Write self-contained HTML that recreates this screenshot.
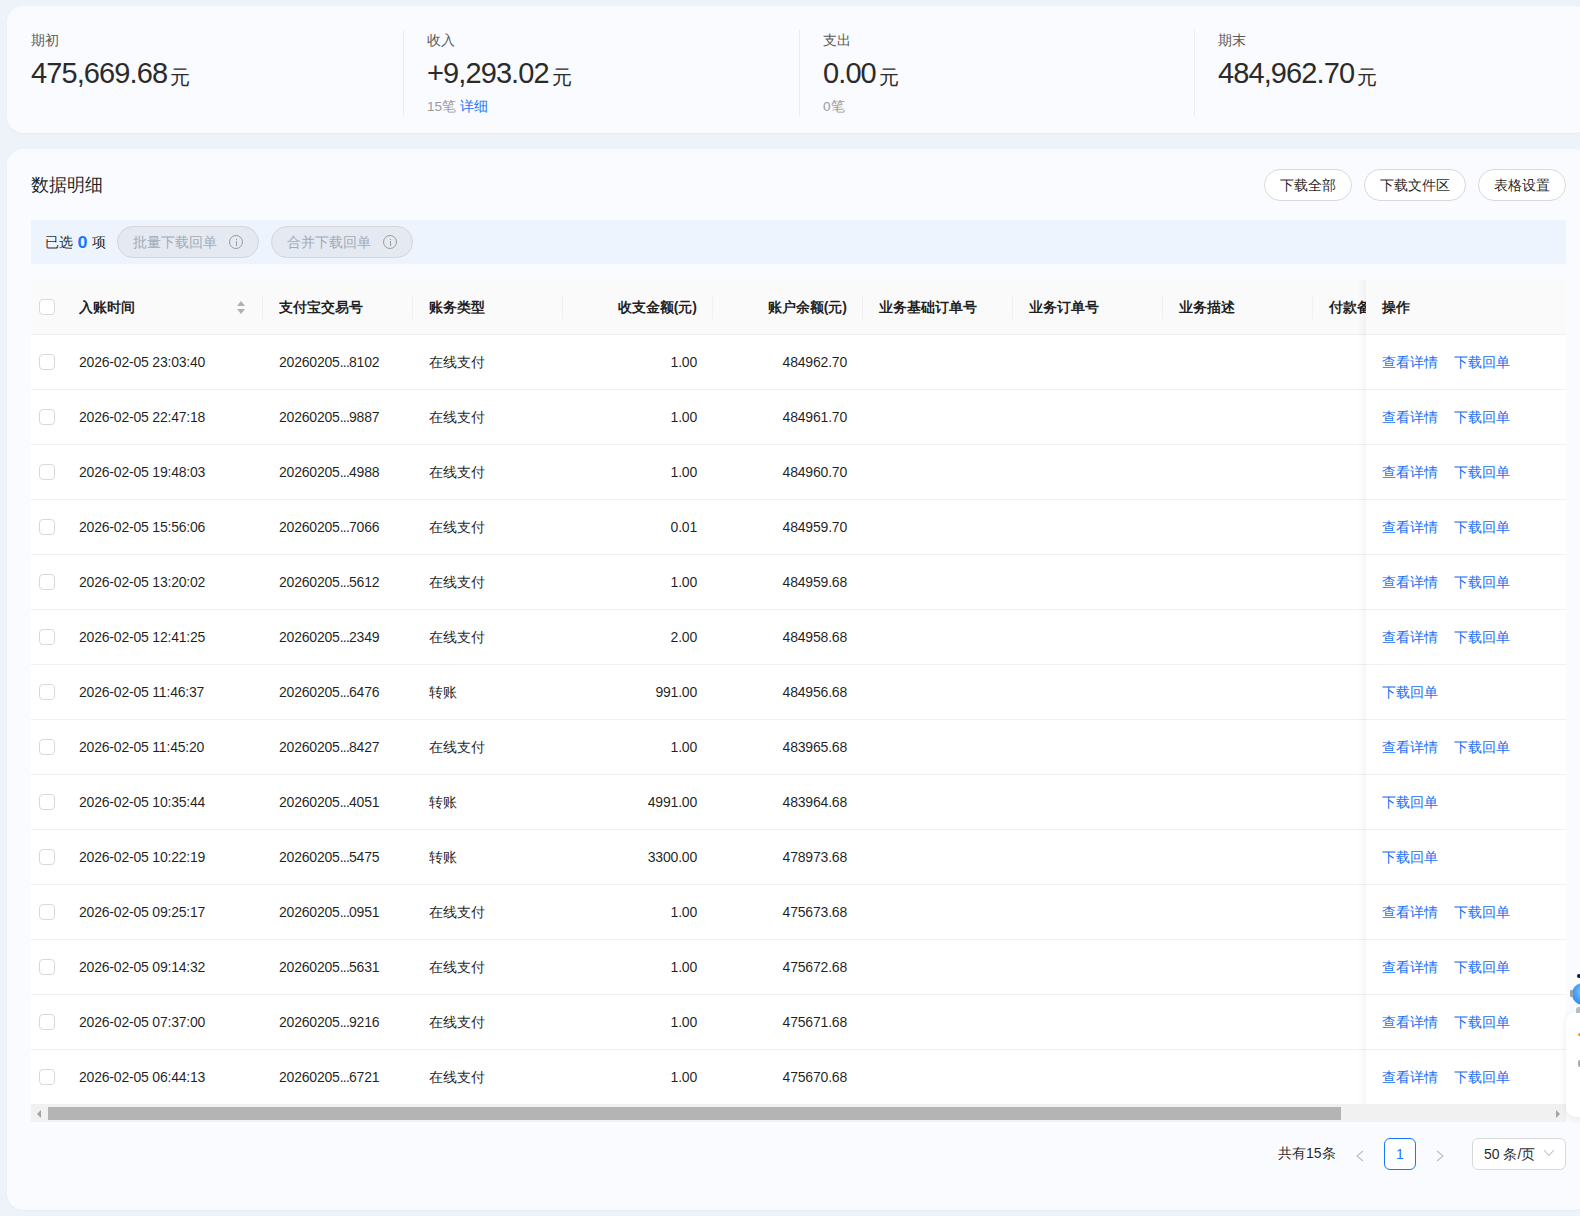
<!DOCTYPE html>
<html><head><meta charset="utf-8">
<style>
*{box-sizing:border-box;margin:0;padding:0}
html,body{width:1580px;height:1216px;overflow:hidden}
body{background:#eef2f9;font-family:"Liberation Sans",sans-serif;color:rgba(0,0,0,.88);position:relative}
.card{position:absolute;left:7px;width:1583px;background:#fafbfe;border-radius:16px;box-shadow:0 1px 2px rgba(0,20,60,.035)}
.abs{position:absolute;white-space:nowrap}
.lbl{font-size:14px;line-height:20px;color:#595959}
.num{font-size:29px;line-height:36px;letter-spacing:-0.9px;color:#2b2b2b}
.yuan{font-size:20px;letter-spacing:0;margin-left:3px;position:relative;top:1px}
.sub{font-size:13.5px;line-height:18px;color:#999}
.sub b{font-weight:normal;color:#1677ff}
.vdiv{position:absolute;top:24px;height:86px;width:1px;background:#ebedf0}
.btn{position:absolute;top:169px;height:32px;border:1px solid #d9d9d9;border-radius:16px;background:#fff;font-size:14px;line-height:30px;text-align:center;color:rgba(0,0,0,.88)}
.bar{position:absolute;left:31px;top:220px;width:1535px;height:44px;background:#eef4fd}
.pill{position:absolute;top:6px;height:32px;border:1px solid #d8d6d6;border-radius:16px;background:#e4e9f2;font-size:14px;line-height:30px;color:#a4abb6;padding-left:15px}
.info{position:absolute;top:8px;width:14px;height:14px;border:1px solid #9c9c9c;border-radius:50%}
.info:before{content:"";position:absolute;left:5.5px;top:2.5px;width:1.5px;height:1.5px;background:#9c9c9c}
.info:after{content:"";position:absolute;left:5.5px;top:5px;width:1.5px;height:4.5px;background:#9c9c9c}
.thead{position:absolute;left:31px;top:280px;width:1535px;height:55px;background:#fafafa;border-bottom:1px solid #f0f0f0;border-radius:10px 0 0 0}
.th{position:absolute;top:0;line-height:54px;font-size:14px;font-weight:bold;color:rgba(0,0,0,.88)}
.sep{position:absolute;top:16px;width:1px;height:23px;background:#f0f0f0}
.row{position:absolute;left:31px;width:1535px;height:55px;background:#fff;border-bottom:1px solid #f0f0f0}
.cb{position:absolute;left:8px;width:16px;height:16px;border:1px solid #d9d9d9;border-radius:4px;background:#fff}
.c{position:absolute;top:0;line-height:54px;font-size:14px;color:rgba(0,0,0,.88)}
.t{font-size:14px;letter-spacing:-0.2px;top:0.4px}
.r{text-align:right}
.fix{position:absolute;left:1366px;top:280px;width:200px;height:824px}
.fshadow{position:absolute;left:1336px;top:280px;width:30px;height:824px;box-shadow:inset -10px 0 8px -8px rgba(5,5,5,.06)}
.frow{position:absolute;left:1366px;width:200px;height:55px;background:#fff;border-bottom:1px solid #f0f0f0}
.lk{position:absolute;top:0;line-height:54px;font-size:14px;color:#1470f5}
.sb{position:absolute;left:31px;top:1104px;width:1535px;height:18px;background:#f1f1f1}
.thumb{position:absolute;left:17px;top:3px;width:1293px;height:13px;background:#b4b4b4}
</style></head><body>
<div class="card" style="top:6px;height:127px">
  <div class="abs lbl" style="left:24px;top:24px">期初</div>
  <div class="abs num" style="left:24px;top:49px">475,669.68<span class="yuan">元</span></div>
  <div class="vdiv" style="left:396px"></div>
  <div class="abs lbl" style="left:420px;top:24px">收入</div>
  <div class="abs num" style="left:420px;top:49px">+9,293.02<span class="yuan">元</span></div>
  <div class="abs sub" style="left:420px;top:92px">15笔 <b>详细</b></div>
  <div class="vdiv" style="left:792px"></div>
  <div class="abs lbl" style="left:816px;top:24px">支出</div>
  <div class="abs num" style="left:816px;top:49px">0.00<span class="yuan">元</span></div>
  <div class="abs sub" style="left:816px;top:92px">0笔</div>
  <div class="vdiv" style="left:1187px"></div>
  <div class="abs lbl" style="left:1211px;top:24px">期末</div>
  <div class="abs num" style="left:1211px;top:49px">484,962.70<span class="yuan">元</span></div>
</div>
<div class="card" style="top:149px;height:1061px"></div>
<div class="abs" style="left:31px;top:172px;font-size:18px;line-height:26px;color:rgba(0,0,0,.88)">数据明细</div>
<div class="btn" style="left:1264px;width:88px">下载全部</div>
<div class="btn" style="left:1364px;width:102px">下载文件区</div>
<div class="btn" style="left:1478px;width:88px">表格设置</div>
<div class="bar">
  <div class="abs" style="left:14px;top:0;line-height:44px;font-size:14px">已选 <b style="color:#1677ff;font-size:16px;display:inline-block;transform:scaleX(1.12);margin:0 1px;position:relative;top:0.5px">0</b> 项</div>
  <div class="pill" style="left:86px;width:142px">批量下载回单<i class="info" style="left:111px"></i></div>
  <div class="pill" style="left:240px;width:142px">合并下载回单<i class="info" style="left:111px"></i></div>
</div>
<div class="thead">
  <i class="cb" style="top:19px"></i>
  <span class="th" style="left:48px">入账时间</span>
  <svg class="abs" style="left:205px;top:20px" width="10" height="16" viewBox="0 0 10 16"><path d="M1 6 L5 1 L9 6 Z M1 9 L5 14 L9 9 Z" fill="#b0b0b0"/></svg>
  <i class="sep" style="left:231px"></i>
  <span class="th" style="left:248px">支付宝交易号</span>
  <i class="sep" style="left:381px"></i>
  <span class="th" style="left:398px">账务类型</span>
  <i class="sep" style="left:531px"></i>
  <span class="th" style="right:869px">收支金额(元)</span>
  <i class="sep" style="left:681px"></i>
  <span class="th" style="right:719px">账户余额(元)</span>
  <i class="sep" style="left:831px"></i>
  <span class="th" style="left:848px">业务基础订单号</span>
  <i class="sep" style="left:981px"></i>
  <span class="th" style="left:998px">业务订单号</span>
  <i class="sep" style="left:1131px"></i>
  <span class="th" style="left:1148px">业务描述</span>
  <i class="sep" style="left:1281px"></i>
  <span class="th" style="left:1298px">付款备注</span>
</div>
<div class="row" style="top:335px"><i class="cb" style="top:19px"></i><span class="c t" style="left:48px">2026-02-05 23:03:40</span><span class="c t" style="left:248px">20260205<span style="letter-spacing:-0.8px">...</span>8102</span><span class="c z" style="left:398px">在线支付</span><span class="c t r" style="right:869px">1.00</span><span class="c t r" style="right:719px">484962.70</span></div>
<div class="frow" style="top:335px"><span class="lk" style="left:16px">查看详情</span><span class="lk" style="left:88px">下载回单</span></div>
<div class="row" style="top:390px"><i class="cb" style="top:19px"></i><span class="c t" style="left:48px">2026-02-05 22:47:18</span><span class="c t" style="left:248px">20260205<span style="letter-spacing:-0.8px">...</span>9887</span><span class="c z" style="left:398px">在线支付</span><span class="c t r" style="right:869px">1.00</span><span class="c t r" style="right:719px">484961.70</span></div>
<div class="frow" style="top:390px"><span class="lk" style="left:16px">查看详情</span><span class="lk" style="left:88px">下载回单</span></div>
<div class="row" style="top:445px"><i class="cb" style="top:19px"></i><span class="c t" style="left:48px">2026-02-05 19:48:03</span><span class="c t" style="left:248px">20260205<span style="letter-spacing:-0.8px">...</span>4988</span><span class="c z" style="left:398px">在线支付</span><span class="c t r" style="right:869px">1.00</span><span class="c t r" style="right:719px">484960.70</span></div>
<div class="frow" style="top:445px"><span class="lk" style="left:16px">查看详情</span><span class="lk" style="left:88px">下载回单</span></div>
<div class="row" style="top:500px"><i class="cb" style="top:19px"></i><span class="c t" style="left:48px">2026-02-05 15:56:06</span><span class="c t" style="left:248px">20260205<span style="letter-spacing:-0.8px">...</span>7066</span><span class="c z" style="left:398px">在线支付</span><span class="c t r" style="right:869px">0.01</span><span class="c t r" style="right:719px">484959.70</span></div>
<div class="frow" style="top:500px"><span class="lk" style="left:16px">查看详情</span><span class="lk" style="left:88px">下载回单</span></div>
<div class="row" style="top:555px"><i class="cb" style="top:19px"></i><span class="c t" style="left:48px">2026-02-05 13:20:02</span><span class="c t" style="left:248px">20260205<span style="letter-spacing:-0.8px">...</span>5612</span><span class="c z" style="left:398px">在线支付</span><span class="c t r" style="right:869px">1.00</span><span class="c t r" style="right:719px">484959.68</span></div>
<div class="frow" style="top:555px"><span class="lk" style="left:16px">查看详情</span><span class="lk" style="left:88px">下载回单</span></div>
<div class="row" style="top:610px"><i class="cb" style="top:19px"></i><span class="c t" style="left:48px">2026-02-05 12:41:25</span><span class="c t" style="left:248px">20260205<span style="letter-spacing:-0.8px">...</span>2349</span><span class="c z" style="left:398px">在线支付</span><span class="c t r" style="right:869px">2.00</span><span class="c t r" style="right:719px">484958.68</span></div>
<div class="frow" style="top:610px"><span class="lk" style="left:16px">查看详情</span><span class="lk" style="left:88px">下载回单</span></div>
<div class="row" style="top:665px"><i class="cb" style="top:19px"></i><span class="c t" style="left:48px">2026-02-05 11:46:37</span><span class="c t" style="left:248px">20260205<span style="letter-spacing:-0.8px">...</span>6476</span><span class="c z" style="left:398px">转账</span><span class="c t r" style="right:869px">991.00</span><span class="c t r" style="right:719px">484956.68</span></div>
<div class="frow" style="top:665px"><span class="lk" style="left:16px">下载回单</span></div>
<div class="row" style="top:720px"><i class="cb" style="top:19px"></i><span class="c t" style="left:48px">2026-02-05 11:45:20</span><span class="c t" style="left:248px">20260205<span style="letter-spacing:-0.8px">...</span>8427</span><span class="c z" style="left:398px">在线支付</span><span class="c t r" style="right:869px">1.00</span><span class="c t r" style="right:719px">483965.68</span></div>
<div class="frow" style="top:720px"><span class="lk" style="left:16px">查看详情</span><span class="lk" style="left:88px">下载回单</span></div>
<div class="row" style="top:775px"><i class="cb" style="top:19px"></i><span class="c t" style="left:48px">2026-02-05 10:35:44</span><span class="c t" style="left:248px">20260205<span style="letter-spacing:-0.8px">...</span>4051</span><span class="c z" style="left:398px">转账</span><span class="c t r" style="right:869px">4991.00</span><span class="c t r" style="right:719px">483964.68</span></div>
<div class="frow" style="top:775px"><span class="lk" style="left:16px">下载回单</span></div>
<div class="row" style="top:830px"><i class="cb" style="top:19px"></i><span class="c t" style="left:48px">2026-02-05 10:22:19</span><span class="c t" style="left:248px">20260205<span style="letter-spacing:-0.8px">...</span>5475</span><span class="c z" style="left:398px">转账</span><span class="c t r" style="right:869px">3300.00</span><span class="c t r" style="right:719px">478973.68</span></div>
<div class="frow" style="top:830px"><span class="lk" style="left:16px">下载回单</span></div>
<div class="row" style="top:885px"><i class="cb" style="top:19px"></i><span class="c t" style="left:48px">2026-02-05 09:25:17</span><span class="c t" style="left:248px">20260205<span style="letter-spacing:-0.8px">...</span>0951</span><span class="c z" style="left:398px">在线支付</span><span class="c t r" style="right:869px">1.00</span><span class="c t r" style="right:719px">475673.68</span></div>
<div class="frow" style="top:885px"><span class="lk" style="left:16px">查看详情</span><span class="lk" style="left:88px">下载回单</span></div>
<div class="row" style="top:940px"><i class="cb" style="top:19px"></i><span class="c t" style="left:48px">2026-02-05 09:14:32</span><span class="c t" style="left:248px">20260205<span style="letter-spacing:-0.8px">...</span>5631</span><span class="c z" style="left:398px">在线支付</span><span class="c t r" style="right:869px">1.00</span><span class="c t r" style="right:719px">475672.68</span></div>
<div class="frow" style="top:940px"><span class="lk" style="left:16px">查看详情</span><span class="lk" style="left:88px">下载回单</span></div>
<div class="row" style="top:995px"><i class="cb" style="top:19px"></i><span class="c t" style="left:48px">2026-02-05 07:37:00</span><span class="c t" style="left:248px">20260205<span style="letter-spacing:-0.8px">...</span>9216</span><span class="c z" style="left:398px">在线支付</span><span class="c t r" style="right:869px">1.00</span><span class="c t r" style="right:719px">475671.68</span></div>
<div class="frow" style="top:995px"><span class="lk" style="left:16px">查看详情</span><span class="lk" style="left:88px">下载回单</span></div>
<div class="row" style="top:1050px"><i class="cb" style="top:19px"></i><span class="c t" style="left:48px">2026-02-05 06:44:13</span><span class="c t" style="left:248px">20260205<span style="letter-spacing:-0.8px">...</span>6721</span><span class="c z" style="left:398px">在线支付</span><span class="c t r" style="right:869px">1.00</span><span class="c t r" style="right:719px">475670.68</span></div>
<div class="frow" style="top:1050px"><span class="lk" style="left:16px">查看详情</span><span class="lk" style="left:88px">下载回单</span></div>
<div class="fshadow"></div>
<div class="frow" style="top:280px;background:#fafafa"><span class="th" style="left:16px">操作</span></div>
<div class="sb"><div class="thumb"></div>
<svg class="abs" style="left:5px;top:6px" width="6" height="8" viewBox="0 0 6 8"><path d="M5 0 L1 4 L5 8 Z" fill="#a3a3a3"/></svg>
<svg class="abs" style="left:1524px;top:6px" width="6" height="8" viewBox="0 0 6 8"><path d="M1 0 L5 4 L1 8 Z" fill="#a3a3a3"/></svg>
</div>
<div class="abs" style="left:1278px;top:1143px;font-size:14px;line-height:20px">共有15条</div>
<svg class="abs" style="left:1355px;top:1150px" width="10" height="12" viewBox="0 0 10 12"><path d="M8 1 L2 6 L8 11" fill="none" stroke="#bfbfbf" stroke-width="1.2"/></svg>
<div class="abs" style="left:1384px;top:1138px;width:32px;height:32px;border:1px solid #1677ff;border-radius:6px;background:#fff;color:#1677ff;font-size:14px;line-height:30px;text-align:center">1</div>
<svg class="abs" style="left:1435px;top:1150px" width="10" height="12" viewBox="0 0 10 12"><path d="M2 1 L8 6 L2 11" fill="none" stroke="#bfbfbf" stroke-width="1.2"/></svg>
<div class="abs" style="left:1472px;top:1138px;width:94px;height:32px;border:1px solid #d9d9d9;border-radius:6px;background:#fff;font-size:14px;line-height:30px;padding-left:11px">50 条/页</div>
<svg class="abs" style="left:1543px;top:1149px" width="12" height="8" viewBox="0 0 12 8"><path d="M1 1 L6 6.5 L11 1" fill="none" stroke="#bfbfbf" stroke-width="1.1"/></svg>
<div class="abs" style="left:1566px;top:1012px;width:30px;height:105px;background:#fff;border-radius:10px;box-shadow:0 2px 8px rgba(0,0,0,.08)">
<i class="abs" style="left:12px;top:21px;width:4px;height:3px;background:#f59a23;border-radius:2px"></i>
<i class="abs" style="left:12px;top:48px;width:4px;height:7px;background:#aaa;border-radius:2px"></i>
</div>
<div class="abs" style="left:1569px;top:972px;width:30px;height:42px">
<i class="abs" style="left:3px;top:11px;width:22px;height:22px;background:radial-gradient(circle at 55% 40%,#a8d8ff 0,#4aa8ff 45%,#2f86ee 80%,#2a6cd0 100%);border-radius:50%"></i>
<i class="abs" style="left:1px;top:18px;width:3px;height:7px;background:#9aa3ad;border-radius:1px"></i>
<i class="abs" style="left:8px;top:2px;width:7px;height:4px;background:#161a3c;border-radius:2px"></i>
<i class="abs" style="left:7px;top:35px;width:12px;height:6px;background:#b8bcc4;border-radius:3px 3px 0 0"></i>
</div>
</body></html>
